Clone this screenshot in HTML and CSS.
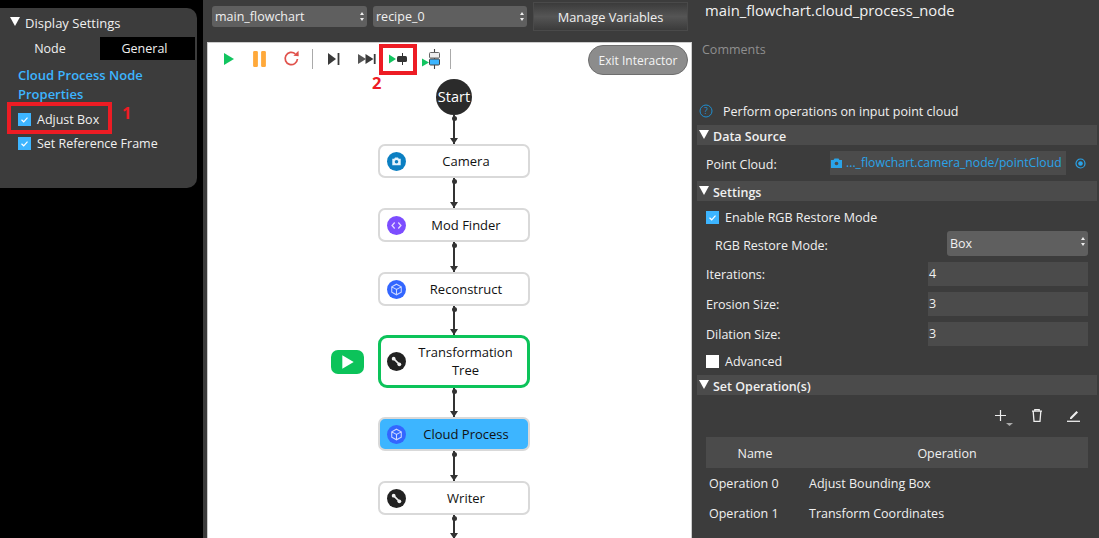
FILE: index.html
```html
<!DOCTYPE html>
<html lang="en">
<head>
<meta charset="utf-8">
<title>Flowchart</title>
<link rel="stylesheet" href="styles.css">
</head>
<body>
<div class="app">
  <aside class="left">
    <section class="display">
      <h2 class="display-head"><span class="tri"></span>Display Settings</h2>
      <div class="tabs"><span class="tab">Node</span><span class="tab tab-on">General</span></div>
      <h3 class="node-title">Cloud Process Node Properties</h3>
      <label class="check check-adjust"><span class="box on"><svg viewBox="0 0 13 13"><path d="M3.5 6.8l2.2 2 3.8-4.2" fill="none" stroke="#fff" stroke-width="1.2"/></svg></span>Adjust Box</label>
      <label class="check"><span class="box on"><svg viewBox="0 0 13 13"><path d="M3.5 6.8l2.2 2 3.8-4.2" fill="none" stroke="#fff" stroke-width="1.2"/></svg></span>Set Reference Frame</label>
      <span class="mark mark-box1"></span>
      <span class="num num1">1</span>
    </section>
  </aside>

  <main class="center">
    <div class="topbar">
      <div class="select sel-a">main_flowchart<span class="updown"></span></div>
      <div class="select sel-b">recipe_0<span class="updown"></span></div>
      <div class="manage">Manage Variables</div>
    </div>
    <div class="canvas">
      <div class="tools">
        <svg class="tool t-play" viewBox="0 0 12 14"><path d="M1 1l10 6-10 6z" fill="#12c560"/></svg>
        <svg class="tool t-pause" viewBox="0 0 14 15"><rect x="1" y="0" width="4.5" height="15" rx="1.2" fill="#ffa93a"/><rect x="8.5" y="0" width="4.5" height="15" rx="1.2" fill="#ffa93a"/></svg>
        <svg class="tool t-reload" viewBox="0 0 16 16"><path d="M13.6 8.5A5.8 5.8 0 1 1 11.6 3.6" fill="none" stroke="#e0524c" stroke-width="1.6"/><path d="M9.8 5.5l5 .3-.2-5z" fill="#e0524c"/></svg>
        <span class="sep sep1"></span>
        <svg class="tool t-step" viewBox="0 0 12 12"><path d="M0 0l8 6-8 6z" fill="#3a3a3a"/><rect x="9.6" y="0" width="1.8" height="12" fill="#3a3a3a"/></svg>
        <svg class="tool t-all" viewBox="0 0 18 12"><path d="M0 1l8 5-8 5z" fill="#555"/><path d="M7.5 1l8 5-8 5z" fill="#3a3a3a"/><rect x="15.8" y="1" width="1.8" height="10" fill="#3a3a3a"/></svg>
        <svg class="tool t-node" viewBox="0 0 20 12"><path d="M0 1.500l7 4.500-7 4.500z" fill="#12c560"/><path d="M13.500 0v12" stroke="#333" stroke-width="1"/><rect x="8" y="3" width="10" height="6" rx="1.500" fill="#333"/></svg>
        <svg class="tool t-cloud" viewBox="0 0 20 20"><path d="M0 9.500l7 4-7 4z" fill="#12c560"/><path d="M12.500 0v20" stroke="#444" stroke-width="1.100"/><rect x="7.500" y="3.500" width="10" height="5.500" rx="1" fill="#eee" stroke="#666"/><rect x="7.500" y="10" width="10" height="6" rx="1" fill="#3db5ff" stroke="#444"/></svg>
        <span class="sep sep2"></span>
        <span class="exit">Exit Interactor</span>
        <span class="mark mark-box2"></span>
        <span class="num num2">2</span>
      </div>
      <div class="flow">
        <div class="start">Start</div>
        <span class="link l29"></span>
        <div class="node"><span class="ico ico-cam"><svg viewBox="0 0 18 18"><path d="M5 6.500h1.800l.8-1.200h2.800l.8 1.200H13v6H5z" fill="#e3f3fd"/><circle cx="9" cy="9.300" r="1.700" fill="#0b7fc2"/></svg></span><span class="label">Camera</span></div>
        <span class="link l30"></span>
        <div class="node"><span class="ico ico-mod"><svg viewBox="0 0 18 18"><path d="M7.300 6.200L4.800 9l2.500 2.800M10.700 6.200L13.200 9l-2.500 2.800" fill="none" stroke="#e4d8ff" stroke-width="1.200"/></svg></span><span class="label">Mod Finder</span></div>
        <span class="link l30"></span>
        <div class="node"><span class="ico ico-cube"><svg viewBox="0 0 18 18"><path d="M9 4l4.500 2.500v5L9 14l-4.500-2.500v-5zM4.500 6.500L9 9l4.500-2.500M9 9v5" fill="none" stroke="#cdd9ff" stroke-width="1"/></svg></span><span class="label">Reconstruct</span></div>
        <span class="link l29"></span>
        <div class="node node-tall">
          <span class="ico ico-tool"><svg viewBox="0 0 18 18"><path d="M6.500 6.500l5 5" stroke="#f2f2f2" stroke-width="1.500"/><circle cx="6.300" cy="6.300" r="1.800" fill="#f2f2f2"/><circle cx="11.700" cy="11.700" r="1.800" fill="#f2f2f2"/></svg></span>
          <span class="label">Transformation Tree</span>
          <span class="run"><svg viewBox="0 0 12 14"><path d="M1 1l10 6-10 6z" fill="#fff"/></svg></span>
        </div>
        <span class="link l29"></span>
        <div class="node node-sel"><span class="ico ico-cube"><svg viewBox="0 0 18 18"><path d="M9 4l4.500 2.500v5L9 14l-4.500-2.500v-5zM4.500 6.500L9 9l4.500-2.500M9 9v5" fill="none" stroke="#cdd9ff" stroke-width="1"/></svg></span><span class="label">Cloud Process</span></div>
        <span class="link l30"></span>
        <div class="node"><span class="ico ico-tool"><svg viewBox="0 0 18 18"><path d="M6.500 6.500l5 5" stroke="#f2f2f2" stroke-width="1.500"/><circle cx="6.300" cy="6.300" r="1.800" fill="#f2f2f2"/><circle cx="11.700" cy="11.700" r="1.800" fill="#f2f2f2"/></svg></span><span class="label">Writer</span></div>
        <span class="link l-end"></span>
      </div>
    </div>
  </main>

  <aside class="right">
    <h1 class="path">main_flowchart.cloud_process_node</h1>
    <div class="comments">Comments</div>
    <div class="help"><svg class="help-ico" viewBox="0 0 14 14"><circle cx="7" cy="7" r="6" fill="none" stroke="#1f8fd0" stroke-width="1"/><text x="7" y="10.200" text-anchor="middle" font-size="9" fill="#1f8fd0" font-family="Open Sans">?</text></svg>Perform operations on input point cloud</div>
    <h2 class="sec sec-data"><span class="tri"></span>Data Source</h2>
    <div class="row-point">
      <span class="lbl">Point Cloud:</span>
      <span class="ref"><svg class="ref-cam" viewBox="0 0 11 10"><path d="M0 2h2.500l1-1.500h4l1 1.500H11v8H0z" fill="#2aa3e8"/><circle cx="5.500" cy="5.500" r="1.800" fill="#4b4b4b"/></svg>..._flowchart.camera_node/pointCloud</span>
      <svg class="target" viewBox="0 0 11 11"><circle cx="5.500" cy="5.500" r="4.500" fill="none" stroke="#2aa3e8" stroke-width="1.200"/><circle cx="5.500" cy="5.500" r="2.300" fill="#2aa3e8"/></svg>
    </div>
    <h2 class="sec sec-set"><span class="tri"></span>Settings</h2>
    <label class="check check-r check-rgb"><span class="box on"><svg viewBox="0 0 13 13"><path d="M3.500 6.800l2.200 2 3.800-4.200" fill="none" stroke="#fff" stroke-width="1.200"/></svg></span>Enable RGB Restore Mode</label>
    <div class="row-mode"><span class="lbl">RGB Restore Mode:</span><div class="select sel-c">Box<span class="updown"></span></div></div>
    <div class="row-num"><span class="lbl">Iterations:</span><span class="num-in">4</span></div>
    <div class="row-num"><span class="lbl">Erosion Size:</span><span class="num-in">3</span></div>
    <div class="row-num"><span class="lbl">Dilation Size:</span><span class="num-in">3</span></div>
    <label class="check check-r check-adv"><span class="box"></span>Advanced</label>
    <h2 class="sec sec-op"><span class="tri"></span>Set Operation(s)</h2>
    <div class="op-tools">
      <svg class="op op-plus" viewBox="0 0 18 18"><path d="M5.500 1v11M0 6.500h11" stroke="#eee" stroke-width="1.200"/><path d="M11 14h7l-3.500 3z" fill="#aaa"/></svg>
      <svg class="op op-trash" viewBox="0 0 12 13"><path d="M3.800 1.500V.7h4.400v.8M1 2.200h10M2.200 2.500l.8 9.800h6l.8-9.800" fill="none" stroke="#eee" stroke-width="1.300"/></svg>
      <svg class="op op-edit" viewBox="0 0 13 13"><path d="M3 8.500l6.500-6.500 1.500 1.500-6.500 6.500H3z" fill="#eee"/><path d="M0 12.300h13" stroke="#eee" stroke-width="1.300"/></svg>
    </div>
    <div class="thead"><span class="col-n">Name</span><span class="col-o">Operation</span></div>
    <div class="trow"><span class="c1">Operation 0</span><span>Adjust Bounding Box</span></div>
    <div class="trow"><span class="c1">Operation 1</span><span>Transform Coordinates</span></div>
  </aside>
</div>
</body>
</html>
```
FILE: styles.css
```css
* { box-sizing: border-box; }
html, body { margin: 0; height: 538px; overflow: hidden; }
body { font-family: "Open Sans", "Noto Sans", sans-serif; font-size: 12.5px; color: #f0f0f0; background: #000; }
h1, h2, h3 { margin: 0; font-weight: 400; }
.app { display: grid; grid-template-columns: 203px 494px 402px; height: 538px; }

.left { padding-top: 8px; background: #000; }
.display { position: relative; width: 197px; height: 180px; background: #3c3c3c; border-radius: 0 10px 10px 0; }
.tri { display: inline-block; width: 0; height: 0; border-left: 5px solid transparent; border-right: 5px solid transparent; border-top: 9px solid #fff; margin-right: 5px; position: relative; top: -2px; }
.display-head { font-size: 13px; height: 29px; padding: 7px 0 0 10px; line-height: 17px; }
.tabs { display: flex; height: 23px; }
.tab { width: 100px; line-height: 24px; text-align: center; }
.tab-on { width: 95px; background: #000; padding-right: 6px; }
.node-title { font-size: 13px; line-height: 19px; color: #3db5ff; font-weight: 600; padding: 6px 10px 0 18px; width: 180px; }
.check { display: flex; align-items: center; gap: 6px; line-height: 17px; }
.left .check { padding-left: 18px; height: 24px; }
.check-adjust { margin-top: 3px; }
.box { width: 13px; height: 13px; background: #fff; flex: none; display: block; }
.box.on { background: #3db5ff; }
.box svg { display: block; width: 13px; height: 13px; }
.mark { position: absolute; border: 4px solid #ed1c24; display: block; }
.mark-box1 { left: 7px; top: 94px; width: 105px; height: 32px; }
.num { position: absolute; color: #ed1c24; font-weight: 700; font-size: 16.5px; line-height: 18px; }
.num1 { left: 122px; top: 96px; }

.center { background: #3c3c3c; padding: 0 5px 0 4px; display: flex; flex-direction: column; }
.topbar { height: 42px; position: relative; display: flex; align-items: flex-start; padding: 6px 0 0 5px; }
.select { position: relative; background: #5f5f5f; border-radius: 3px; height: 21px; line-height: 21px; padding-left: 3px; }
.updown { position: absolute; right: 5px; top: 6px; width: 0; height: 9px; }
.updown::before, .updown::after { content: ""; position: absolute; left: -2.5px; width: 0; height: 0; border-left: 2.5px solid transparent; border-right: 2.5px solid transparent; }
.updown::before { top: 0; border-bottom: 3.5px solid #eee; }
.updown::after { bottom: 0; border-top: 3.5px solid #eee; }
.sel-a { width: 155px; }
.sel-b { width: 154px; margin-left: 6px; }
.manage { width: 155px; height: 29px; margin: -4px 0 0 6px; text-align: center; line-height: 28px; font-size: 12.8px; background: linear-gradient(#3b3b3b, #555 50%, #3b3b3b); border: 1px solid #4a4a4a; }

.canvas { flex: 1; background: #fff; border: 1px solid #ccc; border-bottom: 0; color: #222; position: relative; overflow: hidden; min-height: 0; }
.tools { height: 36px; position: relative; }
.tool { position: absolute; display: block; }
.t-play { left: 15px; top: 9px; width: 12px; height: 14px; }
.t-pause { left: 44px; top: 8px; width: 15px; height: 16px; }
.t-reload { left: 75px; top: 7px; width: 17px; height: 17px; }
.sep { position: absolute; top: 6px; width: 1px; height: 20px; background: #aaa; }
.sep1 { left: 104px; }
.sep2 { left: 242px; }
.t-step { left: 120px; top: 10px; width: 12px; height: 12px; }
.t-all { left: 150px; top: 10px; width: 18px; height: 12px; }
.t-node { left: 181px; top: 10px; width: 20px; height: 12px; }
.t-cloud { left: 214px; top: 6px; width: 20px; height: 20px; }
.exit { position: absolute; left: 380px; top: 2px; width: 100px; height: 30px; border-radius: 15px; background: #8c8c8c; border: 1px solid #6e6e6e; color: #f4f4f4; text-align: center; line-height: 30px; font-size: 12px; }
.mark-box2 { left: 171px; top: 1px; width: 38px; height: 31px; }
.num2 { left: 164px; top: 31px; }

.flow { display: flex; flex-direction: column; align-items: center; width: 492px; }
.start { width: 36px; height: 36px; border-radius: 50%; background: #2b2b2b; color: #fff; text-align: center; line-height: 36px; font-size: 14.5px; flex: none; }
.link { display: block; width: 1.5px; background: #333; position: relative; flex: none; }
.link::before { content: ""; position: absolute; left: -1.5px; top: 1px; width: 5px; height: 5px; border-radius: 50%; background: #333; }
.link::after { content: ""; position: absolute; left: -3.25px; bottom: 0; width: 0; height: 0; border-left: 4px solid transparent; border-right: 4px solid transparent; border-top: 6px solid #333; }
.l29 { height: 29px; }
.l30 { height: 30px; }
.l-end { height: 24px; }
.node { position: relative; width: 152px; height: 34px; border: 2px solid #d9d9d9; border-radius: 7px; background: #fff; display: flex; align-items: center; padding-left: 7px; flex: none; color: #111; }
.node-tall { height: 53px; border: 3px solid #0cc35a; border-radius: 9px; padding-left: 6px; }
.node-tall .label { padding-bottom: 2px; }
.node-sel { background: #3db5ff; }
.ico { width: 19px; height: 19px; border-radius: 50%; flex: none; display: block; }
.ico svg { display: block; width: 19px; height: 19px; }
.ico-cam { background: #0b7fc2; }
.ico-mod { background: #7c4dff; }
.ico-cube { background: #3366ff; }
.ico-tool { background: #222; }
.label { flex: 1; text-align: center; line-height: 18px; padding: 0 8px 0 6px; font-size: 13px; }
.run { position: absolute; left: -50px; top: 12px; width: 33px; height: 24px; background: #0cc35a; border-radius: 7px; display: flex; align-items: center; justify-content: center; }
.run svg { width: 14px; height: 16px; }

.right { background: #3c3c3c; display: flex; flex-direction: column; position: relative; }
.path { font-size: 14.8px; line-height: 20px; padding-left: 8px; height: 40px; color: #f2f2f2; }
.comments { color: #8f8f8f; line-height: 20px; padding-left: 5px; height: 59px; }
.help { display: flex; align-items: center; height: 24px; padding-left: 2px; }
.help-ico { width: 14px; height: 14px; margin-right: 10px; flex: none; }
.sec { width: 400px; height: 20px; background: #4b4b4b; font-size: 12.5px; font-weight: 600; line-height: 18px; padding: 4px 0 0 2px; display: flex; align-items: center; }
.sec .tri { top: -3px; margin-right: 4px; }
.sec-data { margin-top: 2px; }
.row-point { display: flex; align-items: center; height: 24px; margin-top: 6px; padding-left: 9px; }
.lbl { display: block; padding-top: 3px; }
.row-point .lbl { width: 124px; }
.ref { background: #4b4b4b; width: 236px; height: 24px; line-height: 24px; color: #2aa3e8; display: flex; align-items: center; white-space: nowrap; font-size: 12.2px; padding-left: 1px; }
.ref-cam { width: 11px; height: 10px; margin-right: 4px; flex: none; }
.target { width: 11px; height: 11px; margin-left: 9px; flex: none; }
.sec-set { margin-top: 6px; }
.check-r { padding-left: 9px; }
.check-rgb { height: 24px; margin-top: 4px; }
.row-mode { display: flex; align-items: center; height: 25px; margin-top: 2px; padding-left: 18px; }
.row-mode .lbl { width: 232px; }
.sel-c { width: 141px; height: 25px; line-height: 26px; }
.row-num { display: flex; align-items: center; height: 24px; padding-left: 9px; margin-top: 6px; }
.row-num .lbl { width: 222px; padding-top: 1px; }
.num-in { width: 160px; height: 24px; background: #4b4b4b; line-height: 24px; padding-left: 1px; }
.check-adv { height: 18px; margin-top: 6px; }
.sec-op { margin-top: 5px; }
.op-tools { position: relative; height: 42px; }
.op { position: absolute; display: block; }
.op-plus { left: 298px; top: 14px; width: 18px; height: 18px; }
.op-trash { left: 334px; top: 14px; width: 12px; height: 13px; }
.op-edit { left: 370px; top: 14px; width: 13px; height: 13px; }
.thead { margin-left: 9px; width: 382px; height: 31px; background: #4b4b4b; display: flex; align-items: center; padding-top: 2px; }
.col-n { width: 98px; text-align: center; }
.col-o { flex: 1; text-align: center; padding-left: 2px; }
.trow { display: flex; height: 30px; align-items: center; margin-left: 12px; }
.c1 { width: 100px; }
```
